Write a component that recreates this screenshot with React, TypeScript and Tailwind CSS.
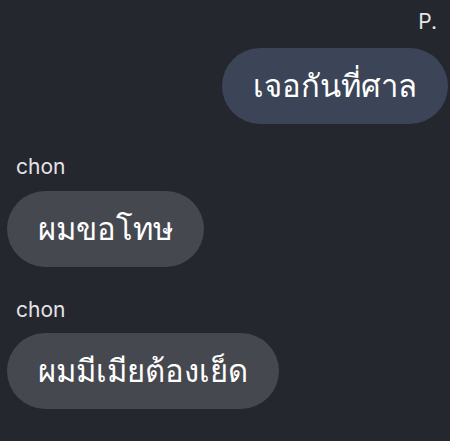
export default function App() {
  return (
    <div className="min-h-screen w-[450px] h-[441px] overflow-hidden bg-[#25272f] font-['Inter','Noto_Sans',sans-serif]">
      <div className="flex flex-col">
        <div className="mt-[8px] pr-[13px] text-right text-[21px] leading-[28px] text-[#e4e4e6]">P.</div>
        <div className="mt-[12px] flex justify-end pr-[2px]">
          <div className="flex h-[76px] items-center rounded-full bg-[#3c4557] px-[31px] text-[31px] text-white">
            เจอกันที่ศาล
          </div>
        </div>

        <div className="mt-[29px] pl-[16px] text-[21px] leading-[28px] text-[#e4e4e6]">chon</div>
        <div className="mt-[10px] flex pl-[7px]">
          <div className="flex h-[76px] items-center rounded-full bg-[#46484f] px-[31px] text-[31px] text-white">
            ผมขอโทษ
          </div>
        </div>

        <div className="mt-[29px] pl-[16px] text-[21px] leading-[28px] text-[#e4e4e6]">chon</div>
        <div className="mt-[9px] flex pl-[7px]">
          <div className="flex h-[76px] items-center rounded-full bg-[#46484f] px-[31px] text-[31px] text-white">
            ผมมีเมียต้องเย็ด
          </div>
        </div>
      </div>
    </div>
  );
}
